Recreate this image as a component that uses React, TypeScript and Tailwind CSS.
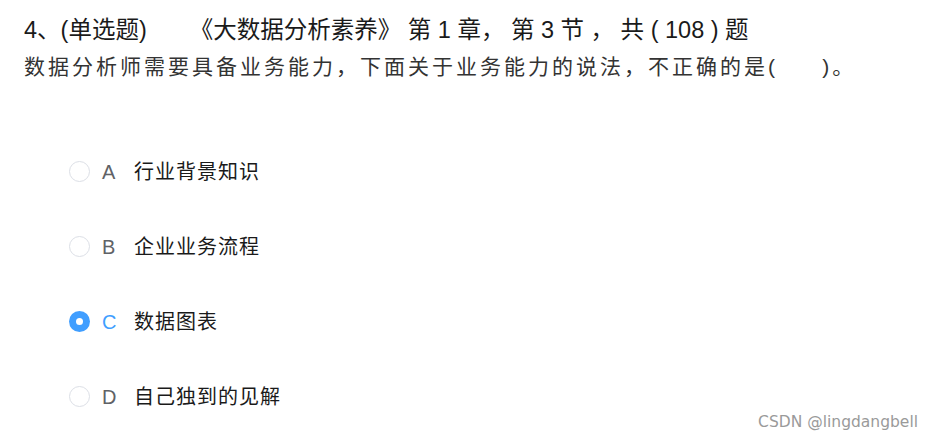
import React from "react";

const options = [
  { key: "A", text: "行业背景知识" },
  { key: "B", text: "企业业务流程" },
  { key: "C", text: "数据图表", checked: true },
  { key: "D", text: "自己独到的见解" },
];

export default function App() {
  return (
    <div
      className="relative w-[932px] h-[444px] bg-white overflow-hidden pl-[24px] pt-[16px]"
      style={{ fontFamily: '"Liberation Sans", Arial, "Noto Sans CJK SC", sans-serif' }}
    >
      <div className="flex items-center h-[30px] text-[23.5px] text-[#1a1a1a] whitespace-pre">
        <span>4、(单选题)</span>
        <span className="ml-[43px]">《大数据分析素养》 第 1 章， 第 3 节 ， 共 ( 108 ) 题</span>
      </div>
      <div className="mt-[6px] h-[30px] flex items-center text-[21px] tracking-[3px] text-[#333333] whitespace-pre">
        数据分析师需要具备业务能力，下面关于业务能力的说法，不正确的是(     )。
      </div>
      <div className="mt-[52px] ml-[45px] flex flex-col">
        {options.map((o) => (
          <div key={o.key} className="h-[75px] flex items-center">
            {o.checked ? (
              <span className="w-[21px] h-[21px] rounded-full bg-[#409eff] flex items-center justify-center">
                <span className="w-[7px] h-[7px] rounded-full bg-white" />
              </span>
            ) : (
              <span className="w-[21px] h-[21px] rounded-full border border-[#dcdfe6] bg-white" />
            )}
            <span
              className={`ml-[12px] w-[32px] text-[20px] ${o.checked ? "text-[#409eff]" : "text-[#606266]"}`}
            >
              {o.key}
            </span>
            <span className="text-[20px] tracking-[1px] text-[#1a1a1a]">{o.text}</span>
          </div>
        ))}
      </div>
      <div
        className="absolute right-[14px] bottom-[10px] text-[15.5px] text-[#9a9a9a]"
        style={{ fontFamily: '"DejaVu Sans", sans-serif' }}
      >
        CSDN @lingdangbell
      </div>
    </div>
  );
}
